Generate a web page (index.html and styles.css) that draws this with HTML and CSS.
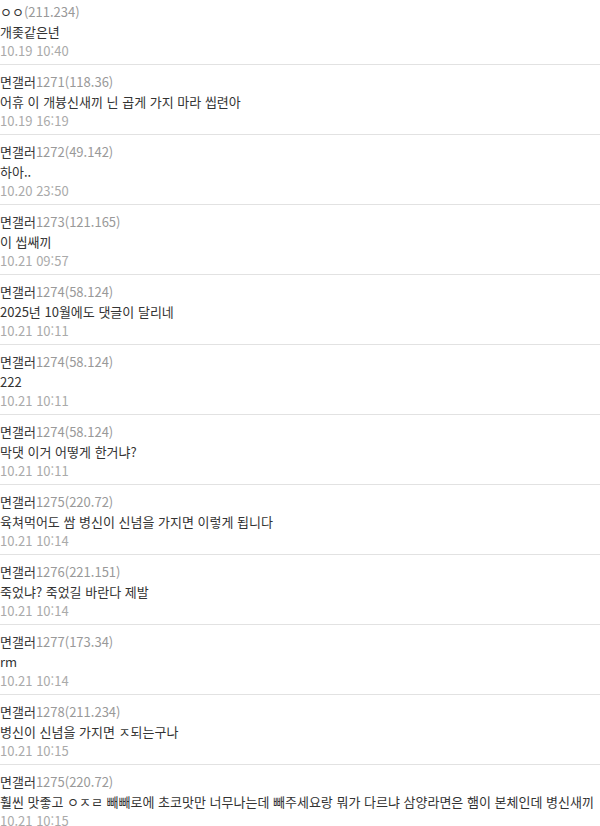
FILE: index.html
```html
<!DOCTYPE html>
<html lang="ko">
<head>
  <meta charset="UTF-8" />
  <meta name="viewport" content="width=device-width, initial-scale=1.0" />
  <title>댓글</title>
  <link rel="stylesheet" href="styles.css">
</head>
<body>
  <ul class="comment-list">
    <li class="comment">
      <div class="comment-author">ㅇㅇ<span class="comment-ip">(211.234)</span></div>
      <p class="comment-text">개좆같은년</p>
      <div class="comment-date">10.19 10:40</div>
    </li>
    <li class="comment">
      <div class="comment-author">면갤러<span class="comment-ip">1271(118.36)</span></div>
      <p class="comment-text">어휴 이 개븅신새끼 닌 곱게 가지 마라 씹련아</p>
      <div class="comment-date">10.19 16:19</div>
    </li>
    <li class="comment">
      <div class="comment-author">면갤러<span class="comment-ip">1272(49.142)</span></div>
      <p class="comment-text">하아..</p>
      <div class="comment-date">10.20 23:50</div>
    </li>
    <li class="comment">
      <div class="comment-author">면갤러<span class="comment-ip">1273(121.165)</span></div>
      <p class="comment-text">이 씹쌔끼</p>
      <div class="comment-date">10.21 09:57</div>
    </li>
    <li class="comment">
      <div class="comment-author">면갤러<span class="comment-ip">1274(58.124)</span></div>
      <p class="comment-text">2025년 10월에도 댓글이 달리네</p>
      <div class="comment-date">10.21 10:11</div>
    </li>
    <li class="comment">
      <div class="comment-author">면갤러<span class="comment-ip">1274(58.124)</span></div>
      <p class="comment-text">222</p>
      <div class="comment-date">10.21 10:11</div>
    </li>
    <li class="comment">
      <div class="comment-author">면갤러<span class="comment-ip">1274(58.124)</span></div>
      <p class="comment-text">막댓 이거 어떻게 한거냐?</p>
      <div class="comment-date">10.21 10:11</div>
    </li>
    <li class="comment">
      <div class="comment-author">면갤러<span class="comment-ip">1275(220.72)</span></div>
      <p class="comment-text">육쳐먹어도 쌈 병신이 신념을 가지면 이렇게 됩니다</p>
      <div class="comment-date">10.21 10:14</div>
    </li>
    <li class="comment">
      <div class="comment-author">면갤러<span class="comment-ip">1276(221.151)</span></div>
      <p class="comment-text">죽었냐? 죽었길 바란다 제발</p>
      <div class="comment-date">10.21 10:14</div>
    </li>
    <li class="comment">
      <div class="comment-author">면갤러<span class="comment-ip">1277(173.34)</span></div>
      <p class="comment-text">rm</p>
      <div class="comment-date">10.21 10:14</div>
    </li>
    <li class="comment">
      <div class="comment-author">면갤러<span class="comment-ip">1278(211.234)</span></div>
      <p class="comment-text">병신이 신념을 가지면 ㅈ되는구나</p>
      <div class="comment-date">10.21 10:15</div>
    </li>
    <li class="comment">
      <div class="comment-author">면갤러<span class="comment-ip">1275(220.72)</span></div>
      <p class="comment-text">훨씬 맛좋고 ㅇㅈㄹ 빼빼로에 초코맛만 너무나는데 빼주세요랑 뭐가 다르냐 삼양라면은 햄이 본체인데 병신새끼</p>
      <div class="comment-date">10.21 10:15</div>
    </li>
  </ul>
</body>
</html>
```

FILE: styles.css
```css
* {
  margin: 0;
  padding: 0;
  box-sizing: border-box;
}

body {
  background-color: #fff;
  font-family: "Noto Sans CJK KR", "Noto Sans", sans-serif;
  font-size: 13px;
  color: #333;
}

.comment-list {
  list-style: none;
}

.comment {
  padding: 7px 0 4px;
  border-bottom: 1px solid #e2e2e2;
}

.comment:first-child {
  padding-top: 2px;
}

.comment-author,
.comment-text,
.comment-date {
  white-space: nowrap;
}

.comment-author {
  line-height: 20px;
  color: #333;
}

.comment-text {
  line-height: 19px;
}

.comment-ip {
  color: #999;
}

.comment-date {
  line-height: 19px;
  color: #aaa;
}
```
